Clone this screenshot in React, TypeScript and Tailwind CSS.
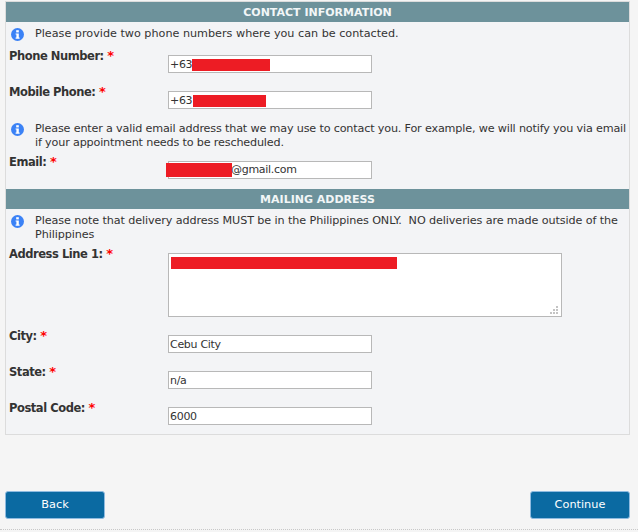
const font = "font-['DejaVu_Sans',sans-serif]";

const InfoIcon = () => (
  <svg width="13" height="13" viewBox="0 0 13 13" className="shrink-0">
    <circle cx="6.5" cy="6.5" r="6.5" fill="#3b82f6" />
    <rect x="5.2" y="2.2" width="2.6" height="2.2" fill="#fff" />
    <path d="M4.6 5.4h3.2v4.2h0.8v1.2H4.6V9.6h0.8V6.6h-0.8z" fill="#fff" />
  </svg>
);

const SectionHeader = ({ title }: { title: string }) => (
  <div className="flex h-[20px] items-center justify-center bg-[#6d929b] pt-[1px] text-[11px] leading-none font-bold text-[#f2f6f7]">
    {title}
  </div>
);

const Note = ({ children, className }: { children: React.ReactNode; className?: string }) => (
  <div className={`flex pl-[5px] pr-[1px] ${className ?? ""}`}>
    <div className="w-[24px] shrink-0 pt-[1px]">
      <InfoIcon />
    </div>
    <p className="text-[11.2px] leading-[14px] text-[#333]">{children}</p>
  </div>
);

const Field = ({
  label,
  value,
  redact,
  className,
}: {
  label: string;
  value?: string;
  redact?: string;
  className?: string;
}) => (
  <div className={`flex h-[18px] pl-[3px] ${className ?? ""}`}>
    <label className="relative top-[-6px] w-[159px] shrink-0 text-[11.5px] leading-[14px] font-bold tracking-[-0.45px] whitespace-nowrap text-[#333]">
      {label} <span className="text-[13px] text-[#f00]">*</span>
    </label>
    <div className="relative h-[18px] w-[204px] border border-[#b8b8b8] bg-white pl-[1px] text-[11px] leading-[17px] tracking-[-0.3px] text-[#333]">
      {value}
      {redact && <span className={`absolute top-[3px] h-[12px] bg-[#ed1c24] ${redact}`} />}
    </div>
  </div>
);

export default function App() {
  return (
    <div className={`flex h-[532px] w-[638px] flex-col bg-[#f5f5f5] ${font}`}>
      <div className="mx-[5px] mt-[1px] h-[434px] w-[625px] border border-[#dcdcdc] bg-[#f3f4f6]">
        <SectionHeader title="CONTACT INFORMATION" />
        <Note className="mt-[5px]">Please provide two phone numbers where you can be contacted.</Note>
        <Field label="Phone Number:" value="+63" redact="left-[23px] w-[78px]" className="mt-[14px]" />
        <Field label="Mobile Phone:" value="+63" redact="left-[24px] w-[73px]" className="mt-[18px]" />
        <Note className="mt-[13px] tracking-[-0.17px]">
          Please enter a valid email address that we may use to contact you. For example, we will notify you via email if your appointment needs to be rescheduled.
        </Note>
        <Field label="Email:" className="mt-[11px]" />
        <div className="mt-[10px]">
          <SectionHeader title="MAILING ADDRESS" />
        </div>
        <Note className="mt-[5px] tracking-[-0.1px]">
          Please note that delivery address MUST be in the Philippines ONLY.&nbsp; NO deliveries are made outside of the Philippines
        </Note>
        <div className="mt-[11px] flex h-[64px] pl-[3px]">
          <label className="relative top-[-6px] w-[159px] shrink-0 text-[11.5px] leading-[14px] font-bold tracking-[-0.45px] text-[#333]">
            Address Line 1: <span className="text-[13px] text-[#f00]">*</span>
          </label>
          <div className="relative h-[64px] w-[394px] border border-[#b8b8b8] bg-white">
            <span className="absolute top-[3px] left-[2px] h-[12px] w-[226px] bg-[#ed1c24]" />
            <svg width="9" height="9" viewBox="0 0 9 9" className="absolute right-[3px] bottom-[1px]">
              <path d="M7 0h2v2H7zM4 3h2v2H4zM7 3h2v2H7zM1 6h2v2H1zM4 6h2v2H4zM7 6h2v2H7z" fill="#c4c4c4" />
            </svg>
          </div>
        </div>
        <Field label="City:" value="Cebu City" className="mt-[18px]" />
        <Field label="State:" value="n/a" className="mt-[18px]" />
        <Field label="Postal Code:" value="6000" className="mt-[18px]" />
      </div>
      <div className="mt-[56px] flex justify-between pr-[8px] pl-[5px]">
        <button className="h-[28px] w-[100px] rounded-[3px] border border-[#8fbbe0] bg-[#0b6aa2] text-[11.3px] text-white">Back</button>
        <button className="h-[28px] w-[100px] rounded-[3px] border border-[#8fbbe0] bg-[#0b6aa2] text-[11.3px] text-white">Continue</button>
      </div>
      <div className="mt-[10px] border-t border-dotted border-[#c8c8c8]" />
      <div className="absolute top-[161px] left-[166px] flex h-[18px] items-center text-[11px] tracking-[-0.3px] text-[#333]">
        <span className="h-[14px] w-[66px] bg-[#ed1c24]" />
        <span className="-ml-[1px] pt-[1px]">@gmail.com</span>
      </div>
    </div>
  );
}
